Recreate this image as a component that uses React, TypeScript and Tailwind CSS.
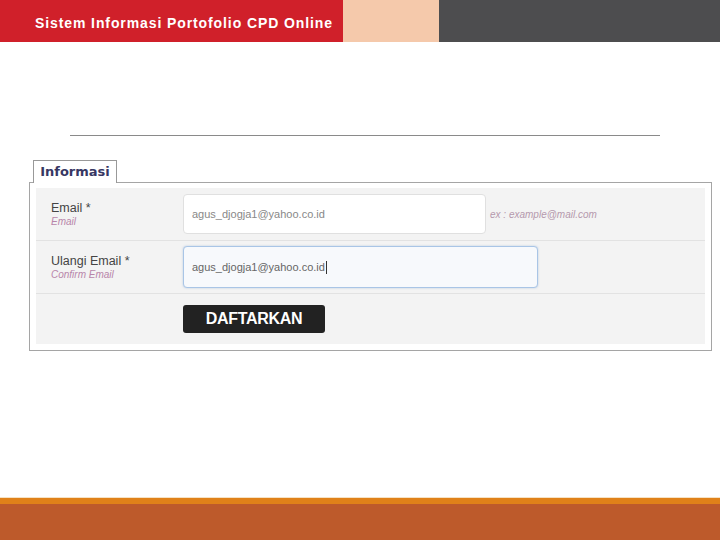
export default function App() {
  return (
    <div className="w-[720px] h-[540px] bg-white flex flex-col font-['Liberation_Sans',Arial,sans-serif]">
      {/* header */}
      <div className="flex h-[42px] shrink-0">
        <div className="w-[343px] bg-[#d0202a] flex items-center pl-[35px] pt-[3px]">
          <span className="text-white font-bold text-[14px] tracking-[0.9px] leading-none">
            Sistem Informasi Portofolio CPD Online
          </span>
        </div>
        <div className="w-[96px] bg-[#f5c9ab]" />
        <div className="flex-1 bg-[#4d4d4f]" />
      </div>

      <div className="flex-1 flex flex-col">
        <div className="mt-[93px] mx-[70px] w-[590px] h-px bg-[#8a8a8a]" />

        <div className="mt-[23px] ml-[29px] w-[683px]">
          {/* tab */}
          <div className="ml-[4px] w-[84px] h-[23px] border border-b-0 border-[#999] bg-white flex items-center justify-center relative top-px">
            <span className="font-['DejaVu_Sans',Verdana,sans-serif] font-bold text-[13px] text-[#373763]">Informasi</span>
          </div>
          <div className="border border-[#a5a5a5] px-[6px] pt-[5px] pb-[6px]">
            <div className="bg-[#f3f3f3]">
              {/* row 1 */}
              <div className="flex items-center h-[53px] border-b border-[#e2e2e2]">
                <div className="w-[147px] pl-[15px] flex flex-col">
                  <span className="text-[12.5px] text-[#444] leading-[15px]">Email *</span>
                  <span className="text-[10px] italic text-[#b885aa] leading-[12px]">Email</span>
                </div>
                <div className="w-[303px] h-[40px] bg-white border border-[#e0e0e0] rounded-[4px] flex items-center pl-[8px]">
                  <span className="text-[11px] text-[#888]">agus_djogja1@yahoo.co.id</span>
                </div>
                <span className="ml-[4px] text-[10px] italic text-[#b599ad]">ex : example@mail.com</span>
              </div>
              {/* row 2 */}
              <div className="flex items-center h-[53px] border-b border-[#e2e2e2]">
                <div className="w-[147px] pl-[15px] flex flex-col">
                  <span className="text-[12.5px] text-[#444] leading-[15px]">Ulangi Email *</span>
                  <span className="text-[10px] italic text-[#b885aa] leading-[12px]">Confirm Email</span>
                </div>
                <div className="w-[355px] h-[42px] bg-[#f7f9fc] border border-[#a9c5e6] rounded-[4px] flex items-center pl-[8px] shadow-[0_0_2px_rgba(120,160,210,0.5)]">
                  <span className="text-[11px] text-[#666]">agus_djogja1@yahoo.co.id</span>
                  <span className="w-px h-[13px] bg-[#333] ml-px" />
                </div>
              </div>
              {/* row 3 */}
              <div className="flex items-center h-[50px]">
                <div className="w-[147px]" />
                <div className="w-[142px] h-[28px] bg-[#222] rounded-[3px] flex items-center justify-center">
                  <span className="text-white font-bold text-[16px] tracking-[-0.3px]">DAFTARKAN</span>
                </div>
              </div>
            </div>
          </div>
        </div>
      </div>

      {/* footer */}
      <div className="h-px bg-[#f6e2c4] shrink-0" />
      <div className="h-[6px] bg-[#e08119] shrink-0" />
      <div className="h-[36px] bg-[#bd5a2b] shrink-0" />
    </div>
  );
}
